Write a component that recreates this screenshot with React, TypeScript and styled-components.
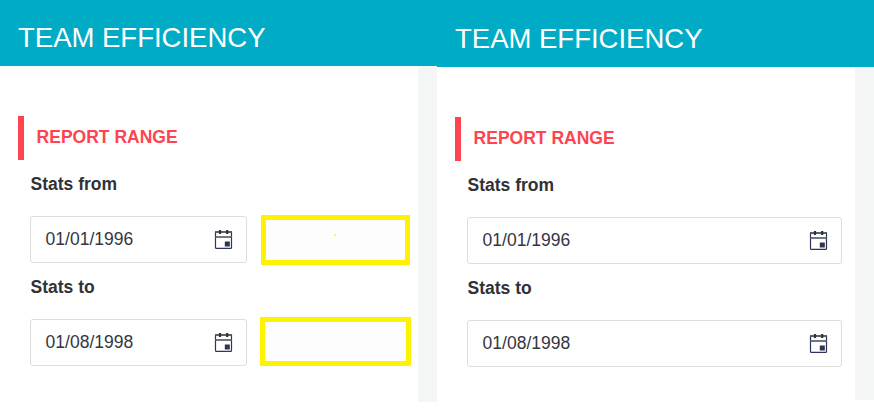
import React from "react";
import styled, { createGlobalStyle } from "styled-components";

const GlobalStyle = createGlobalStyle`
  *, *::before, *::after { box-sizing: border-box; }
  body {
    margin: 0;
    background: #ffffff;
    font-family: "Liberation Sans", Arial, sans-serif;
    overflow: hidden;
  }
`;

const Page = styled.main`
  display: flex;
  align-items: flex-start;
  width: 874px;
  height: 409px;
  background: #ffffff;
`;

const Screen = styled.section`
  flex: 0 0 437px;
  display: flex;
  flex-direction: column;
`;

const Header = styled.header<{ $tall?: boolean }>`
  height: ${(p) => (p.$tall ? 67 : 66)}px;
  padding: ${(p) => (p.$tall ? 23 : 22)}px 0 0 18px;
  background: #00acc5;
`;

const Title = styled.h1`
  margin: 0;
  font-size: 27.5px;
  line-height: 32px;
  font-weight: 400;
  color: #ffffff;
  white-space: nowrap;
`;

const Body = styled.div<{ $height: number }>`
  display: flex;
  height: ${(p) => p.$height}px;
`;

const Panel = styled.div`
  flex: 1;
  min-width: 0;
  padding: 50px 0 0 18px;
`;

const Gutter = styled.div`
  flex: 0 0 19px;
  background: #f4f6f6;
`;

const SectionTitle = styled.h2`
  display: flex;
  align-items: center;
  height: 44px;
  margin: 0;
  padding: 0 0 2px 12.6px;
  border-left: 6px solid #ff4450;
  font-size: 17.5px;
  line-height: 20px;
  font-weight: 700;
  color: #ff4450;
`;

const Fields = styled.div`
  padding: 0 13px 0 12px;
`;

const Field = styled.div`
  display: flex;
  flex-direction: column;
`;

const Label = styled.label`
  height: 44px;
  margin-top: 12px;
  padding-left: 0.5px;
  font-size: 17.5px;
  line-height: 24px;
  font-weight: 700;
  color: #303236;
`;

const Row = styled.div`
  display: flex;
  align-items: flex-start;
  height: 47px;
`;

const DateBox = styled.div<{ $short?: boolean }>`
  display: flex;
  flex: ${(p) => (p.$short ? "0 0 217px" : "1")};
  justify-content: space-between;
  height: 47px;
  padding: 12px 13px 0 14.6px;
  border: 1px solid #dcdddf;
  border-radius: 3px;
  font-size: 17.5px;
  line-height: 20px;
  color: #34363f;
`;

const Highlight = styled.div<{ $w: number; $h: number; $up: number; $gap: number }>`
  flex: 0 0 ${(p) => p.$w}px;
  height: ${(p) => p.$h}px;
  margin: -${(p) => p.$up}px -20px 0 ${(p) => p.$gap}px;
  border: 5px solid #fff200;
  background: #fdfdfd;
`;

const Speck = styled.div`
  width: 2px;
  height: 2px;
  margin: 14px 0 0 68px;
  background: #fff564;
`;

const Icon = styled.svg`
  display: block;
  flex: none;
  margin-top: 1px;
`;

function CalendarIcon() {
  return (
    <Icon width="19" height="19" viewBox="0 0 19 19" fill="none">
      <path d="M1.5 2V17.5Q1.5 18.4 2.4 18.4H16.6Q17.5 18.4 17.5 17.5V2" stroke="#2f3558" strokeWidth="1.2" />
      <path d="M1 2H18" stroke="#4c4e59" strokeWidth="1.8" />
      <path d="M1 7H18" stroke="#50565e" strokeWidth="1.6" />
      <path d="M6 0V4M13.2 0V4" stroke="#30343f" strokeWidth="2.2" />
      <rect x="10.8" y="11.5" width="5" height="5" fill="#303549" />
    </Icon>
  );
}

type Mark = { w: number; h: number; up: number; gap: number; speck?: boolean };

function ReportScreen({ tall, height, marks }: { tall?: boolean; height: number; marks?: Mark[] }) {
  const fields = [
    { label: "Stats from", value: "01/01/1996" },
    { label: "Stats to", value: "01/08/1998" },
  ];
  return (
    <Screen>
      <Header $tall={tall}>
        <Title>TEAM EFFICIENCY</Title>
      </Header>
      <Body $height={height}>
        <Panel>
          <SectionTitle>REPORT RANGE</SectionTitle>
          <Fields>
            {fields.map((f, i) => {
              const mark = marks?.[i];
              return (
                <Field key={f.label}>
                  <Label>{f.label}</Label>
                  <Row>
                    <DateBox $short={!!mark}>
                      <span>{f.value}</span>
                      <CalendarIcon />
                    </DateBox>
                    {mark && (
                      <Highlight $w={mark.w} $h={mark.h} $up={mark.up} $gap={mark.gap}>
                        {mark.speck && <Speck />}
                      </Highlight>
                    )}
                  </Row>
                </Field>
              );
            })}
          </Fields>
        </Panel>
        <Gutter />
      </Body>
    </Screen>
  );
}

const marks: Mark[] = [
  { w: 149, h: 50, up: 1, gap: 14, speck: true },
  { w: 151, h: 49, up: 2, gap: 13 },
];

export default function App() {
  return (
    <>
      <GlobalStyle />
      <Page>
        <ReportScreen height={336} marks={marks} />
        <ReportScreen tall height={333} />
      </Page>
    </>
  );
}
